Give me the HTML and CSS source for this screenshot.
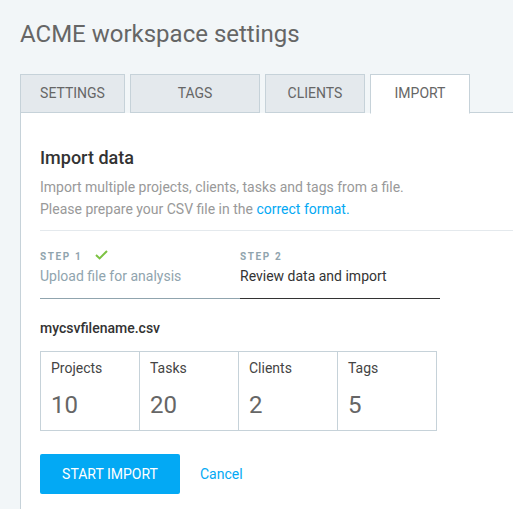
FILE: index.html
```html
<!DOCTYPE html>
<html>
<head>
<meta charset="utf-8">
<link rel="stylesheet" href="styles.css">
</head>
<body>
<div class="page">
  <h1 class="title">ACME workspace settings</h1>
  <div class="tabs">
    <div class="tab tab-settings">SETTINGS</div>
    <div class="tab tab-tags">TAGS</div>
    <div class="tab tab-clients">CLIENTS</div>
    <div class="tab tab-import active">IMPORT</div>
    <div class="tab-rest"></div>
  </div>
  <div class="panel">
    <h2 class="heading">Import data</h2>
    <p class="desc">Import multiple projects, clients, tasks and tags from a file.<br>Please prepare your CSV file in the <a class="link" href="#">correct format.</a></p>
    <div class="divider"></div>
    <div class="steps">
      <div class="step done">
        <div class="step-label"><span>STEP 1</span>
          <svg class="check" width="13" height="10" viewBox="0 0 13 10"><path d="M1 5 L4.6 8.4 L12 1" fill="none" stroke="#7cc242" stroke-width="2"/></svg>
        </div>
        <div class="step-name">Upload file for analysis</div>
      </div>
      <div class="step current">
        <div class="step-label"><span>STEP 2</span></div>
        <div class="step-name">Review data and import</div>
      </div>
    </div>
    <div class="filename">mycsvfilename.csv</div>
    <div class="stats">
      <div class="stat"><div class="stat-label">Projects</div><div class="stat-num">10</div></div>
      <div class="stat"><div class="stat-label">Tasks</div><div class="stat-num">20</div></div>
      <div class="stat"><div class="stat-label">Clients</div><div class="stat-num">2</div></div>
      <div class="stat"><div class="stat-label">Tags</div><div class="stat-num">5</div></div>
    </div>
    <div class="actions">
      <button class="btn">START IMPORT</button>
      <a class="cancel" href="#">Cancel</a>
    </div>
  </div>
</div>
</body>
</html>
```
FILE: styles.css
```css
* { box-sizing: border-box; }
html, body { margin: 0; padding: 0; }
body {
  background: #f2f6f8;
  font-family: Roboto, "Liberation Sans", sans-serif;
  width: 513px;
  height: 509px;
  overflow: hidden;
}
.page { padding: 20px 0 0 20px; }
.title {
  margin: 0;
  font-size: 24px;
  font-weight: 400;
  color: #666;
  line-height: 28px;
  height: 54px;
}
.tabs {
  display: flex;
  align-items: flex-end;
  height: 39px;
}
.tab {
  height: 39px;
  border: 1px solid #c6d2d9;
  background: #e4e9ed;
  color: #666;
  font-size: 14px;
  display: flex;
  align-items: center;
  justify-content: center;
  margin-right: 5px;
  padding-bottom: 1px;
}
.tab-settings { width: 105px; }
.tab-tags { width: 130px; }
.tab-clients { width: 100px; }
.tab-import { width: 100px; margin-right: 0; }
.tab.active {
  background: #fff;
  border-bottom-color: #fff;
  height: 40px;
  margin-bottom: -1px;
  padding-bottom: 2px;
  position: relative;
}
.tab-rest {
  flex: 1;
  border-bottom: 1px solid #c6d2d9;
  height: 39px;
}
.panel {
  background: #fff;
  border-left: 1px solid #c6d2d9;
  padding: 34px 0 30px 19px;
  min-height: 400px;
}
.heading {
  margin: 0;
  font-size: 18px;
  font-weight: 500;
  color: #333;
  line-height: 22px;
}
.desc {
  margin: 7px 0 0 0;
  font-size: 14px;
  line-height: 22px;
  color: #999;
}
.link { color: #03a9f4; text-decoration: none; }
.divider {
  height: 1px;
  background: #e4e9ed;
  margin-top: 10px;
}
.steps {
  display: flex;
  margin-top: 19px;
}
.step {
  width: 200px;
  padding-bottom: 13px;
  border-bottom: 1px solid #90a4ae;
}
.step.current { border-bottom-color: #333; }
.step-label {
  font-size: 10px;
  font-weight: 700;
  letter-spacing: 1.6px;
  color: #90a4ae;
  line-height: 14px;
  display: flex;
  align-items: center;
}
.check { margin-left: 13px; margin-top: -5px; }
.step-name {
  margin-top: 3px;
  font-size: 14px;
  line-height: 18px;
  color: #90a4ae;
}
.step.current .step-name { color: #333; }
.filename {
  margin-top: 20px;
  font-size: 14px;
  font-weight: 500;
  color: #333;
  line-height: 18px;
}
.stats {
  display: flex;
  width: 397px;
  margin-top: 14px;
  border: 1px solid #c6d2d9;
}
.stat {
  flex: 1;
  height: 78px;
  padding: 7px 10px 0 10px;
  border-left: 1px solid #c6d2d9;
}
.stat:first-child { border-left: none; }
.stat-label {
  font-size: 14px;
  color: #444;
  line-height: 18px;
}
.stat-num {
  margin-top: 13px;
  font-size: 24px;
  color: #666;
  line-height: 30px;
}
.actions {
  display: flex;
  align-items: center;
  margin-top: 23px;
}
.btn {
  width: 140px;
  height: 40px;
  border: none;
  border-radius: 2px;
  background: #03a9f4;
  color: #fff;
  font-family: Roboto, "Liberation Sans", sans-serif;
  font-size: 14px;
  padding: 0;
}
.cancel {
  margin-left: 20px;
  color: #03a9f4;
  font-size: 14px;
  text-decoration: none;
}
```
